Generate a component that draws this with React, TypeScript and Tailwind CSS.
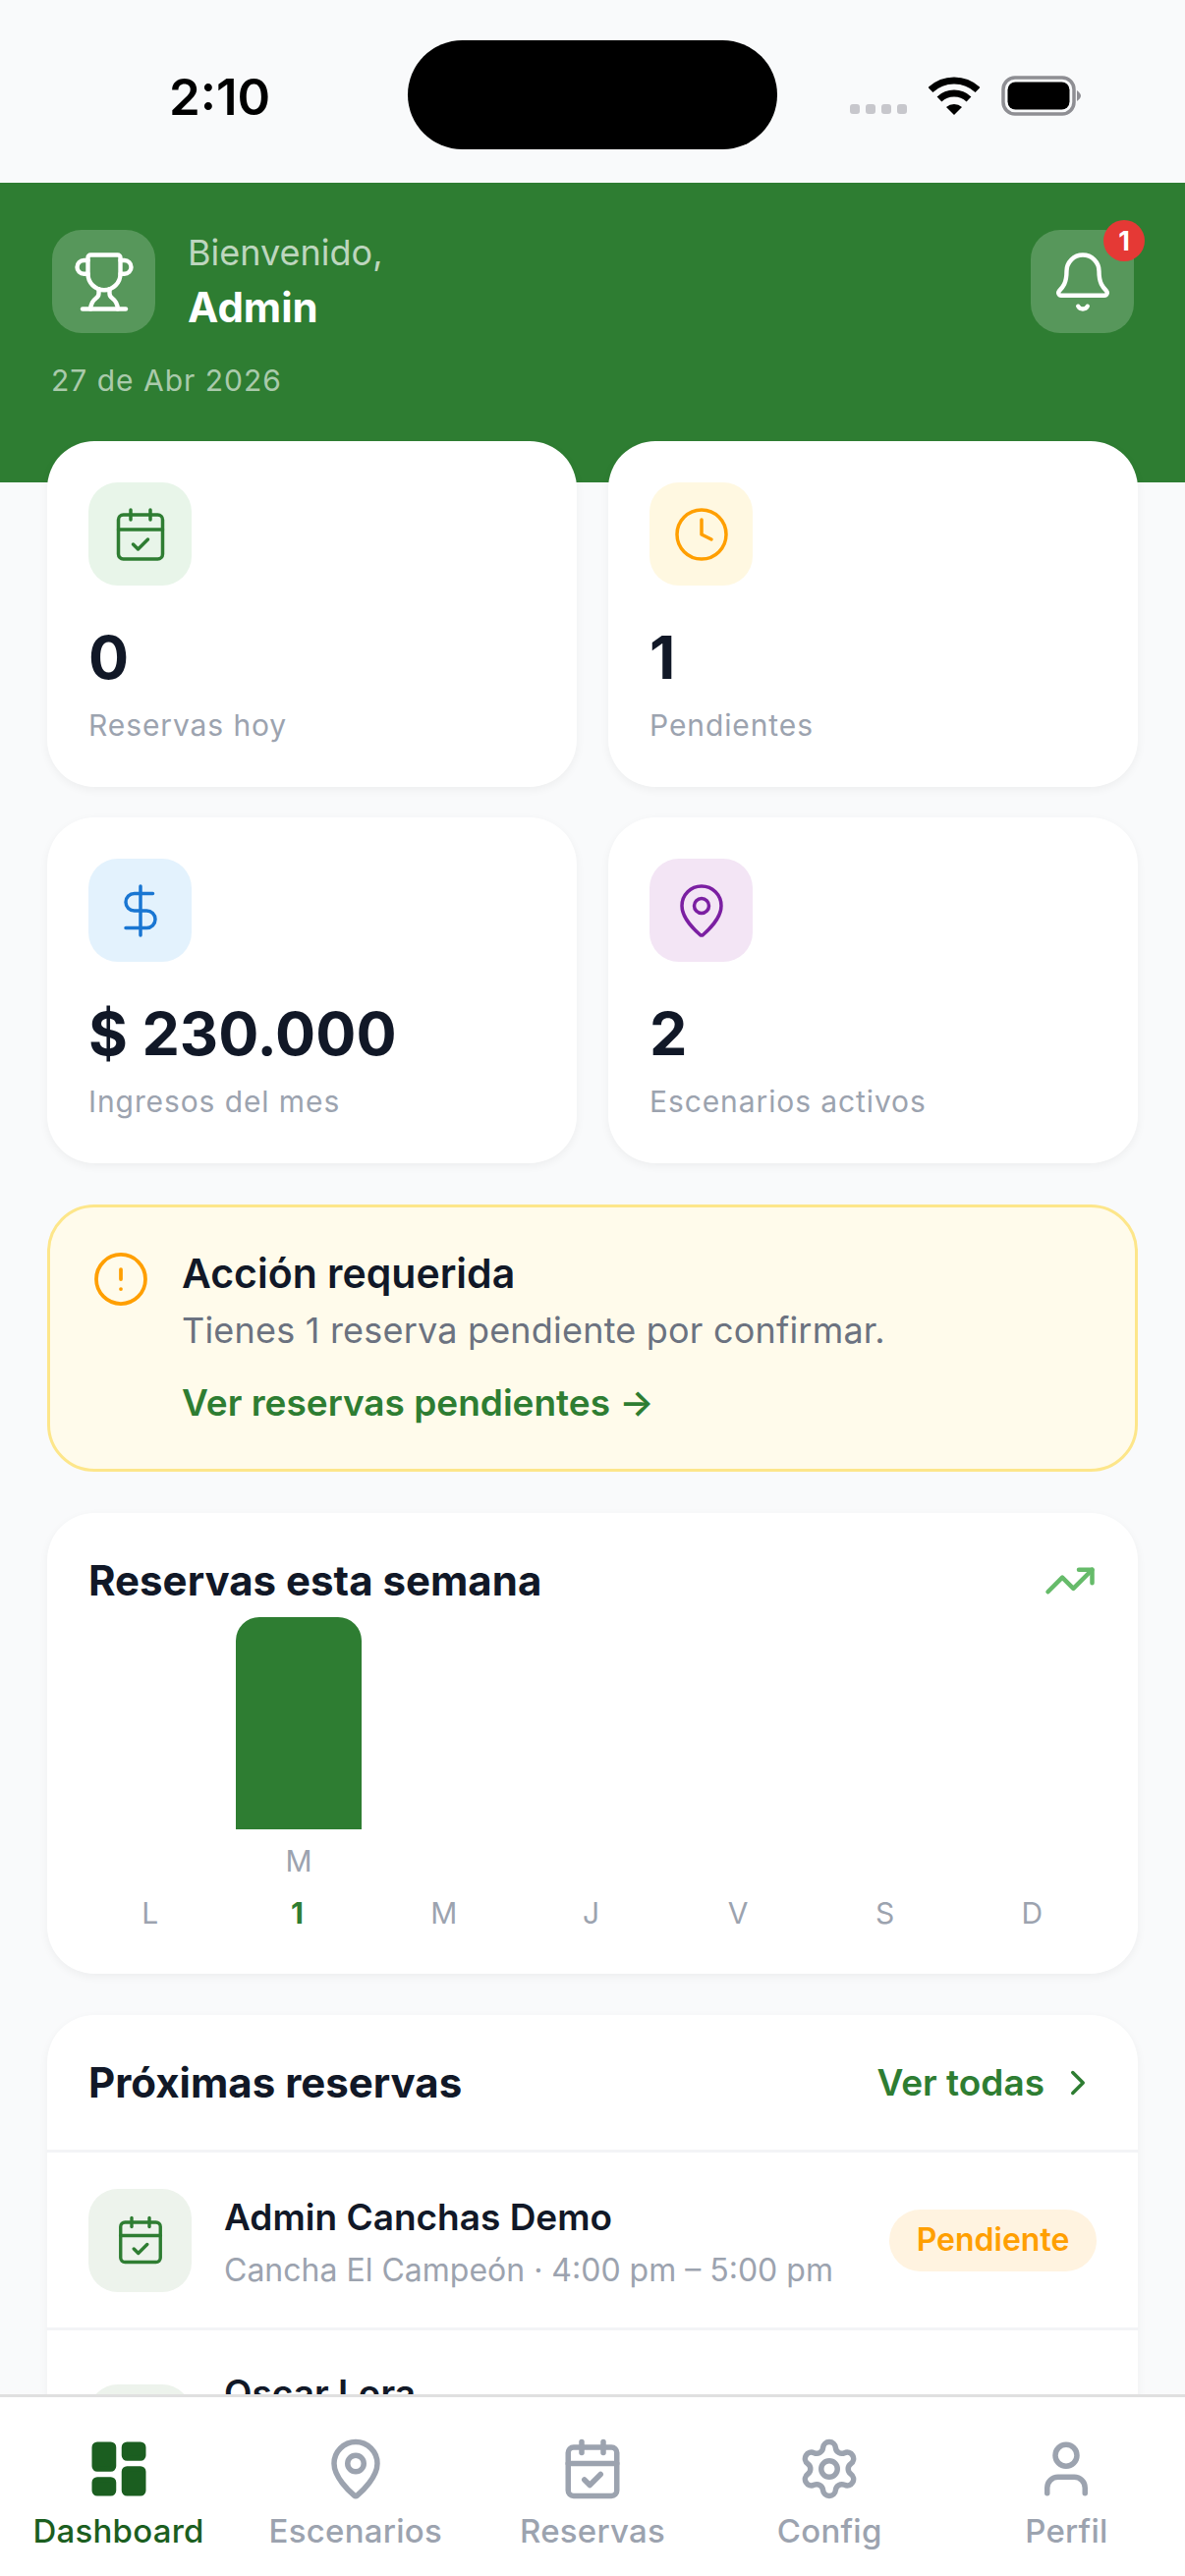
import { Bell, CalendarCheck, ChevronRight, CircleAlert, Clock, DollarSign, LayoutDashboard, MapPin, Settings, TrendingUp, Trophy, User } from "lucide-react";

function StatCard({ icon, bg, value, label }: { icon: React.ReactNode; bg: string; value: string; label: string }) {
  return (
    <div className="h-[352px] rounded-[48px] bg-white p-[42px] shadow-[0_3px_10px_rgba(0,0,0,0.05)]">
      <div className={`flex h-[105px] w-[105px] items-center justify-center rounded-[30px] ${bg}`}>{icon}</div>
      <div className="mt-[33px] text-[61px] font-bold leading-[80px] text-[#111827]">{value}</div>
      <div className="mt-[9px] text-[30px] leading-[40px] tracking-[0.9px] text-[#9ca3af]">{label}</div>
    </div>
  );
}

function NavItem({ icon, label, active }: { icon: React.ReactNode; label: string; active?: boolean }) {
  return (
    <div className="flex flex-col items-center">
      {icon}
      <span className={`mt-[10px] text-[33px] font-medium leading-[40px] tracking-[0.25px] ${active ? "text-[#1b5e20]" : "text-[#9ca3af]"}`}>{label}</span>
    </div>
  );
}

export default function App() {
  const days = ["L", "1", "M", "J", "V", "S", "D"];
  return (
    <div className="flex h-[2622px] w-[1206px] flex-col overflow-hidden bg-[#f9fafb] font-['Inter',sans-serif]">
      {/* status bar */}
      <div className="relative flex h-[186px] shrink-0 items-start bg-[#f9fafb]">
        <div className="ml-[172px] mt-[68px] w-[243px] text-[51px] font-semibold leading-[62px] text-black">2:10</div>
        <div className="mt-[41px] h-[111px] w-[376px] rounded-full bg-black" />
        <div className="ml-[74px] mt-[106px] flex gap-[6px]">
          {[0, 1, 2, 3].map((d) => (
            <div key={d} className="h-[10px] w-[10px] rounded-[3px] bg-[#c7c7cc]" />
          ))}
        </div>
        <svg className="ml-[22px] mt-[78px]" width="52" height="39" viewBox="0 0 52 39">
          <path d="M2 13.5 A35 35 0 0 1 50 13.5" fill="none" stroke="#000" strokeWidth="7" />
          <path d="M11 23 A22 22 0 0 1 41 23" fill="none" stroke="#000" strokeWidth="7" />
          <path d="M18 31 L26 39 L34 31 A12 12 0 0 0 18 31 Z" fill="#000" />
        </svg>
        <svg className="ml-[22px] mt-[77px]" width="83" height="41" viewBox="0 0 83 41">
          <rect x="2" y="2" width="72" height="37" rx="12" fill="none" stroke="#8e8e93" strokeWidth="3.5" />
          <rect x="6.5" y="6.5" width="63" height="28" rx="8" fill="#000" />
          <path d="M77 15 L77 26 Q81 23 81 20.5 Q81 18 77 15 Z" fill="#8e8e93" />
        </svg>
      </div>

      {/* header */}
      <div className="h-[305px] shrink-0 bg-[#2e7d32] pl-[53px] pr-[52px] pt-[48px]">
        <div className="flex items-start justify-between">
          <div className="flex items-start">
            <div className="flex h-[105px] w-[105px] items-center justify-center rounded-[30px] bg-white/20">
              <Trophy size={66} strokeWidth={1.6} className="text-white" />
            </div>
            <div className="ml-[33px] flex flex-col">
              <span className="mt-[-2px] text-[36px] leading-[50px] text-white/70">Bienvenido,</span>
              <span className="mt-[6px] text-[42px] font-bold leading-[50px] text-white">Admin</span>
            </div>
          </div>
          <div className="relative flex h-[105px] w-[105px] items-center justify-center rounded-[30px] bg-white/20">
            <Bell size={66} strokeWidth={1.6} className="text-white" />
            <div className="absolute right-[-11px] top-[-10px] flex h-[42px] w-[42px] items-center justify-center rounded-full bg-[#e53935] text-[27px] font-bold leading-none text-white">1</div>
          </div>
        </div>
        <div className="ml-[-1px] mt-[28px] text-[30px] leading-[40px] tracking-[1px] text-white/60">27 de Abr 2026</div>
      </div>

      {/* content */}
      <div className="mt-[-42px] min-h-0 flex-1 overflow-hidden px-[48px]">
        <div className="grid grid-cols-2 gap-x-[32px] gap-y-[31px]">
          <StatCard bg="bg-[#e8f5e9]" icon={<CalendarCheck size={60} strokeWidth={1.4} className="text-[#2e7d32]" />} value="0" label="Reservas hoy" />
          <StatCard bg="bg-[#fff8e1]" icon={<Clock size={60} strokeWidth={1.4} className="text-[#ff9f00]" />} value="1" label="Pendientes" />
          <StatCard bg="bg-[#e3f2fd]" icon={<DollarSign size={60} strokeWidth={1.4} className="text-[#1976d2]" />} value="$ 230.000" label="Ingresos del mes" />
          <StatCard bg="bg-[#f3e5f5]" icon={<MapPin size={60} strokeWidth={1.4} className="text-[#7b1fa2]" />} value="2" label="Escenarios activos" />
        </div>

        {/* alert */}
        <div className="mt-[42px] flex h-[272px] rounded-[48px] border-[3px] border-[#fde68a] bg-[#fffbeb] pl-[42px] pt-[42px]">
          <CircleAlert size={60} strokeWidth={1.5} className="mt-[1px] shrink-0 text-[#ff9f00]" />
          <div className="ml-[32px] flex flex-col">
            <span className="text-[41px] font-semibold leading-[50px] text-[#111827]">Acción requerida</span>
            <span className="mt-[8px] text-[36px] leading-[50px] tracking-[0.2px] text-[#6b7280]">Tienes 1 reserva pendiente por confirmar.</span>
            <span className="mt-[24px] text-[37px] font-semibold leading-[50px] text-[#2e7d32]">Ver reservas pendientes →</span>
          </div>
        </div>

        {/* chart */}
        <div className="mt-[42px] h-[469px] rounded-[48px] bg-white pt-[42px] shadow-[0_3px_10px_rgba(0,0,0,0.05)]">
          <div className="flex items-center justify-between pl-[42px] pr-[42px]">
            <span className="text-[42px] font-bold leading-[50px] text-[#111827]">Reservas esta semana</span>
            <TrendingUp size={54} strokeWidth={2} className="text-[#66bb6a]" />
          </div>
          <div className="mt-[10px] grid h-[268px] grid-cols-7 pl-[32px] pr-[32px]">
            <div />
            <div className="flex flex-col items-center">
              <div className="h-[216px] w-[128px] rounded-t-[24px] bg-[#2e7d32]" />
              <span className="mt-[12px] text-[30px] leading-[40px] text-[#9ca3af]">M</span>
            </div>
          </div>
          <div className="mt-[13px] grid grid-cols-7 pl-[30px] pr-[33px]">
            {days.map((d, i) => (
              <span key={i} className={`text-center text-[30px] leading-[40px] ${i === 1 ? "font-bold text-[#2e7d32]" : "text-[#9ca3af]"}`}>{d}</span>
            ))}
          </div>
        </div>

        {/* upcoming */}
        <div className="mt-[42px] rounded-[48px] bg-white shadow-[0_3px_10px_rgba(0,0,0,0.05)]">
          <div className="flex h-[140px] items-center justify-between border-b-[3px] border-[#f3f4f6] pl-[42px] pr-[40px]">
            <span className="text-[42px] font-bold leading-[50px] text-[#111827]">Próximas reservas</span>
            <span className="flex items-center gap-[13px] text-[37px] font-semibold text-[#2e7d32]">
              Ver todas
              <ChevronRight size={42} strokeWidth={2} />
            </span>
          </div>
          <div className="flex h-[181px] items-center border-b-[3px] border-[#f3f4f6] px-[42px]">
            <div className="flex h-[105px] w-[105px] shrink-0 items-center justify-center rounded-[30px] bg-[#edf3ec]">
              <CalendarCheck size={54} strokeWidth={1.5} className="text-[#2e7d32]" />
            </div>
            <div className="ml-[33px] flex min-w-0 flex-1 flex-col pt-[6px]">
              <span className="text-[37px] font-semibold leading-[48px] text-[#111827]">Admin Canchas Demo</span>
              <span className="mt-[8px] text-[32px] leading-[44px] text-[#9ca3af]">Cancha El Campeón · 4:00 pm – 5:00 pm</span>
            </div>
            <span className="flex h-[63px] w-[211px] shrink-0 items-center justify-center rounded-full bg-[#fff3e0] text-[32px] font-semibold text-[#ff9f00]">Pendiente</span>
          </div>
          <div className="flex h-[220px] items-start px-[42px]">
            <div className="mt-[55px] flex h-[105px] w-[105px] shrink-0 items-center justify-center rounded-[30px] bg-[#edf3ec]">
              <CalendarCheck size={54} strokeWidth={1.5} className="text-[#2e7d32]" />
            </div>
            <div className="ml-[33px] mt-[40px] flex min-w-0 flex-1 flex-col">
              <span className="text-[37px] font-semibold leading-[48px] text-[#111827]">Oscar Lora</span>
            </div>
          </div>
        </div>
      </div>

      {/* bottom nav */}
      <div className="grid h-[185px] shrink-0 grid-cols-5 border-t-[3px] border-[#e0e0e0] bg-white pt-[40px]">
        <NavItem active label="Dashboard" icon={<LayoutDashboard size={66} strokeWidth={2} className="fill-[#1b5e20] text-[#1b5e20]" />} />
        <NavItem label="Escenarios" icon={<MapPin size={66} strokeWidth={2} className="text-[#9ca3af]" />} />
        <NavItem label="Reservas" icon={<CalendarCheck size={66} strokeWidth={2} className="text-[#9ca3af]" />} />
        <NavItem label="Config" icon={<Settings size={66} strokeWidth={2} className="text-[#9ca3af]" />} />
        <NavItem label="Perfil" icon={<User size={66} strokeWidth={2} className="text-[#9ca3af]" />} />
      </div>
    </div>
  );
}
